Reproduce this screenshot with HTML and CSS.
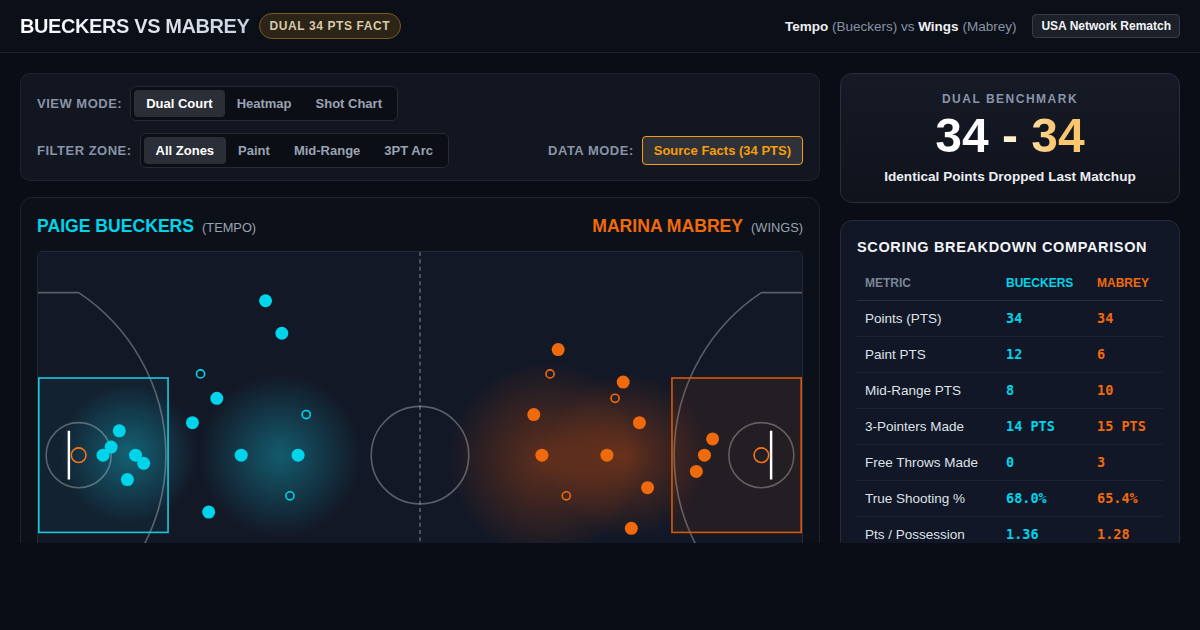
FILE: index.html
```html
<!DOCTYPE html>
<html lang="en">
<head>
    <meta charset="UTF-8">
    <title>Bueckers vs Mabrey</title>
    <link rel="stylesheet" href="styles.css">
</head>
<body>
    <header class="topbar">
        <div class="brand">
            <h1 class="title">BUECKERS VS MABREY</h1>
            <span class="fact-badge">DUAL 34 PTS FACT</span>
        </div>
        <div class="matchup">
            <span class="teams"><b>Tempo</b> <span class="muted">(Bueckers) vs</span> <b>Wings</b> <span class="muted">(Mabrey)</span></span>
            <span class="net-badge">USA Network Rematch</span>
        </div>
    </header>

    <main class="layout">
        <section class="left-col">
            <!-- controls -->
            <div class="controls">
                <div class="control-row">
                    <span class="ctrl-label">VIEW MODE:</span>
                    <div class="seg">
                        <button class="seg-btn active">Dual Court</button>
                        <button class="seg-btn">Heatmap</button>
                        <button class="seg-btn">Shot Chart</button>
                    </div>
                </div>
                <div class="control-row">
                    <span class="ctrl-label">FILTER ZONE:</span>
                    <div class="seg">
                        <button class="seg-btn active">All Zones</button>
                        <button class="seg-btn">Paint</button>
                        <button class="seg-btn">Mid-Range</button>
                        <button class="seg-btn">3PT Arc</button>
                    </div>
                    <div class="data-mode">
                        <span class="ctrl-label">DATA MODE:</span>
                        <button class="source-btn">Source Facts (34 PTS)</button>
                    </div>
                </div>
            </div>

            <!-- court -->
            <div class="court-card">
                <div class="court-head">
                    <div class="player"><span class="pname cyan">PAIGE BUECKERS</span><span class="team">(TEMPO)</span></div>
                    <div class="player"><span class="pname orange">MARINA MABREY</span><span class="team">(WINGS)</span></div>
                </div>
                <div class="court">
                    <svg viewBox="0 0 940 500" class="court-svg">
                        <defs>
                            <radialGradient id="glowCyan">
                                <stop offset="0" stop-color="#14b8d0" stop-opacity="0.42"/>
                                <stop offset="1" stop-color="#14b8d0" stop-opacity="0"/>
                            </radialGradient>
                            <radialGradient id="glowOrange">
                                <stop offset="0" stop-color="#ea580c" stop-opacity="0.36"/>
                                <stop offset="1" stop-color="#ea580c" stop-opacity="0"/>
                            </radialGradient>
                        </defs>

                        <!-- heat -->
                        <circle cx="112" cy="248" r="85" fill="url(#glowCyan)"/>
                        <circle cx="298" cy="250" r="100" fill="url(#glowCyan)"/>
                        <circle cx="625" cy="255" r="120" fill="url(#glowOrange)"/>
                        <circle cx="725" cy="250" r="100" fill="url(#glowOrange)"/>

                        <!-- lines -->
                        <g fill="none" stroke="rgba(255,255,255,0.3)" stroke-width="2">
                            <path d="M0 50 L50 50 A240 240 0 0 1 50 450 L0 450"/>
                            <path d="M940 50 L890 50 A240 240 0 0 0 890 450 L940 450"/>
                            <circle cx="470" cy="250" r="60"/>
                            <circle cx="50" cy="250" r="40"/>
                            <circle cx="890" cy="250" r="40"/>
                            <line x1="470" y1="0" x2="470" y2="500" stroke-dasharray="5 4"/>
                        </g>
                        <rect x="1" y="155" width="159" height="190" fill="rgba(34,211,238,0.06)" stroke="#1cc4dc" stroke-width="2"/>
                        <rect x="780" y="155" width="159" height="190" fill="rgba(234,88,12,0.08)" stroke="#d4580c" stroke-width="2"/>

                        <line x1="38" y1="220" x2="38" y2="280" stroke="#fff" stroke-width="3"/>
                        <line x1="902" y1="220" x2="902" y2="280" stroke="#fff" stroke-width="3"/>
                        <circle cx="50" cy="250" r="9" fill="none" stroke="#f97316" stroke-width="2"/>
                        <circle cx="890" cy="250" r="9" fill="none" stroke="#f97316" stroke-width="2"/>

                        <!-- bueckers shots -->
                        <g fill="#00d4ea">
                            <circle cx="280" cy="60" r="8"/>
                            <circle cx="300" cy="100" r="8"/>
                            <circle cx="220" cy="180" r="8"/>
                            <circle cx="190" cy="210" r="8"/>
                            <circle cx="100" cy="220" r="8"/>
                            <circle cx="90" cy="240" r="8"/>
                            <circle cx="80" cy="250" r="8"/>
                            <circle cx="120" cy="250" r="8"/>
                            <circle cx="130" cy="260" r="8"/>
                            <circle cx="110" cy="280" r="8"/>
                            <circle cx="250" cy="250" r="8"/>
                            <circle cx="320" cy="250" r="8"/>
                            <circle cx="210" cy="320" r="8"/>
                        </g>
                        <g fill="none" stroke="#00d4ea" stroke-width="2">
                            <circle cx="200" cy="150" r="5"/>
                            <circle cx="330" cy="200" r="5"/>
                            <circle cx="310" cy="300" r="5"/>
                        </g>

                        <!-- mabrey shots -->
                        <g fill="#ef6a0c">
                            <circle cx="640" cy="120" r="8"/>
                            <circle cx="720" cy="160" r="8"/>
                            <circle cx="610" cy="200" r="8"/>
                            <circle cx="740" cy="210" r="8"/>
                            <circle cx="620" cy="250" r="8"/>
                            <circle cx="700" cy="250" r="8"/>
                            <circle cx="830" cy="230" r="8"/>
                            <circle cx="820" cy="250" r="8"/>
                            <circle cx="810" cy="270" r="8"/>
                            <circle cx="750" cy="290" r="8"/>
                            <circle cx="730" cy="340" r="8"/>
                        </g>
                        <g fill="none" stroke="#ef6a0c" stroke-width="2">
                            <circle cx="630" cy="150" r="5"/>
                            <circle cx="710" cy="180" r="5"/>
                            <circle cx="650" cy="300" r="5"/>
                        </g>
                    </svg>
                </div>
            </div>
        </section>

        <aside class="right-col">
            <div class="bench-card">
                <div class="bench-label">DUAL BENCHMARK</div>
                <div class="bench-score">34 - 34</div>
                <div class="bench-sub">Identical Points Dropped Last Matchup</div>
            </div>

            <div class="table-card">
                <h2 class="table-title">SCORING BREAKDOWN COMPARISON</h2>
                <table class="stats">
                    <thead>
                        <tr>
                            <th class="c-metric">METRIC</th>
                            <th class="c-val cyan">BUECKERS</th>
                            <th class="c-last orange">MABREY</th>
                        </tr>
                    </thead>
                    <tbody>
                        <tr><td>Points (PTS)</td><td class="num cyan">34</td><td class="num orange">34</td></tr>
                        <tr><td>Paint PTS</td><td class="num cyan">12</td><td class="num orange">6</td></tr>
                        <tr><td>Mid-Range PTS</td><td class="num cyan">8</td><td class="num orange">10</td></tr>
                        <tr><td>3-Pointers Made</td><td class="num cyan">14 PTS</td><td class="num orange">15 PTS</td></tr>
                        <tr><td>Free Throws Made</td><td class="num cyan">0</td><td class="num orange">3</td></tr>
                        <tr><td>True Shooting %</td><td class="num cyan">68.0%</td><td class="num orange">65.4%</td></tr>
                        <tr><td>Pts / Possession</td><td class="num cyan">1.36</td><td class="num orange">1.28</td></tr>
                    </tbody>
                </table>
            </div>
        </aside>
    </main>
</body>
</html>
```

FILE: styles.css
```css
/* base */
body {
    margin: 0;
    background: #0a0d15;
    color: #e5e7eb;
    font-family: "Liberation Sans", Arial, sans-serif;
}

.cyan { color: #00d4ea; }
.orange { color: #f06a0c; }

/* top bar */
.topbar {
    height: 52px;
    padding: 0 20px;
    display: flex;
    align-items: center;
    justify-content: space-between;
    border-bottom: 1px solid #1d222c;
    background: #0b0f18;
}

.brand {
    display: flex;
    align-items: center;
    gap: 9px;
}

.title {
    margin: 0;
    font-size: 20px;
    font-weight: 700;
    letter-spacing: -0.4px;
    background: linear-gradient(90deg, #ffffff, #c9d0e0);
    -webkit-background-clip: text;
    background-clip: text;
    color: transparent;
}

.fact-badge {
    height: 24px;
    line-height: 24px;
    padding: 0 10px;
    border: 1px solid #7a5a1e;
    border-radius: 13px;
    background: #2b2417;
    color: #d8c9aa;
    font-size: 12px;
    font-weight: 700;
    letter-spacing: 0.6px;
}

.matchup {
    display: flex;
    align-items: center;
    gap: 16px;
    font-size: 13.5px;
}

.teams b { color: #eef0f4; }
.muted { color: #8a93a6; }

.net-badge {
    padding: 4px 8px;
    border: 1px solid #363b46;
    border-radius: 4px;
    background: #1c2029;
    color: #f3f4f6;
    font-size: 12px;
    font-weight: 700;
}

/* layout */
.layout {
    box-sizing: border-box;
    height: 490px;
    padding: 20px 20px 0;
    display: grid;
    grid-template-columns: 800px 340px;
    gap: 20px;
    overflow: hidden;
}

.left-col {
    display: flex;
    flex-direction: column;
    gap: 16px;
}

.right-col {
    display: flex;
    flex-direction: column;
    gap: 17px;
}

/* controls */
.controls {
    padding: 12px 16px;
    background: #121620;
    border: 1px solid #1e232d;
    border-radius: 10px;
    display: flex;
    flex-direction: column;
    gap: 12px;
}

.control-row {
    display: flex;
    align-items: center;
    gap: 8px;
}

.ctrl-label {
    font-size: 13px;
    font-weight: 700;
    letter-spacing: 0.5px;
    color: #8993a8;
}

.seg {
    display: flex;
    padding: 3px;
    background: #0b0e15;
    border: 1px solid #252a34;
    border-radius: 6px;
}

.seg-btn {
    height: 27px;
    padding: 0 12px;
    border: none;
    border-radius: 4px;
    background: transparent;
    color: #9aa3b4;
    font-family: inherit;
    font-size: 13px;
    font-weight: 700;
}

.seg-btn.active {
    background: #2a2e36;
    color: #ffffff;
}

.data-mode {
    margin-left: auto;
    display: flex;
    align-items: center;
    gap: 8px;
}

.source-btn {
    height: 29px;
    padding: 0 11px;
    border: 1px solid #f59e0b;
    border-radius: 4px;
    background: #2e3138;
    color: #f59e0b;
    font-family: inherit;
    font-size: 13px;
    font-weight: 700;
}

/* court */
.court-card {
    padding: 18px 16px 16px;
    background: #0c1018;
    border: 1px solid #1e232d;
    border-radius: 12px;
}

.court-head {
    display: flex;
    justify-content: space-between;
    align-items: baseline;
    margin-bottom: 14px;
}

.player {
    display: flex;
    align-items: baseline;
    gap: 8px;
}

.pname {
    font-size: 17.6px;
    font-weight: 700;
}

.team {
    font-size: 12.8px;
    color: #9aa2b2;
}

.court {
    background: #131826;
    border: 1px solid #222836;
    border-radius: 6px;
    overflow: hidden;
}

.court-svg {
    display: block;
    width: 100%;
}

/* benchmark */
.bench-card {
    padding: 18px 16px 18px;
    text-align: center;
    background: linear-gradient(180deg, #151a26, #0f131c);
    border: 1px solid #292e39;
    border-radius: 12px;
}

.bench-label {
    font-size: 12px;
    font-weight: 700;
    letter-spacing: 1.5px;
    color: #8a94a9;
}

.bench-score {
    margin-top: 4px;
    font-size: 48px;
    font-weight: 700;
    line-height: 1.1;
    background: linear-gradient(90deg, #ffffff 35%, #fde4b0 60%, #fbc66e 80%);
    -webkit-background-clip: text;
    background-clip: text;
    color: transparent;
    display: inline-block;
}

.bench-sub {
    margin-top: 6px;
    font-size: 13.6px;
    font-weight: 700;
    color: #eceef2;
}

/* table */
.table-card {
    padding: 16px 16px 0;
    background: #111726;
    border: 1px solid #252b38;
    border-radius: 12px;
}

.table-title {
    margin: 2px 0 12px;
    font-size: 14.5px;
    font-weight: 700;
    letter-spacing: 0.65px;
    color: #f3f4f6;
    white-space: nowrap;
}

.stats {
    width: 100%;
    table-layout: fixed;
    border-collapse: collapse;
    font-size: 13.5px;
}

.stats th {
    padding: 9px 8px 10px;
    line-height: 14px;
    text-align: left;
    font-size: 12px;
    font-weight: 700;
    border-bottom: 1px solid #2a303d;
}

.stats th.c-metric { color: #7b8598; width: 125px; }
.stats th.c-val { width: 75px; }

.stats td {
    padding: 10px 8px;
    line-height: 15px;
    color: #dfe2e8;
    border-bottom: 1px solid #1d2331;
    white-space: nowrap;
}

.stats td.num {
    font-family: "DejaVu Sans Mono", monospace;
    font-weight: 700;
    font-size: 13.5px;
}

.stats td.cyan { color: #00d4ea; }
.stats td.orange { color: #f06a0c; }
```
